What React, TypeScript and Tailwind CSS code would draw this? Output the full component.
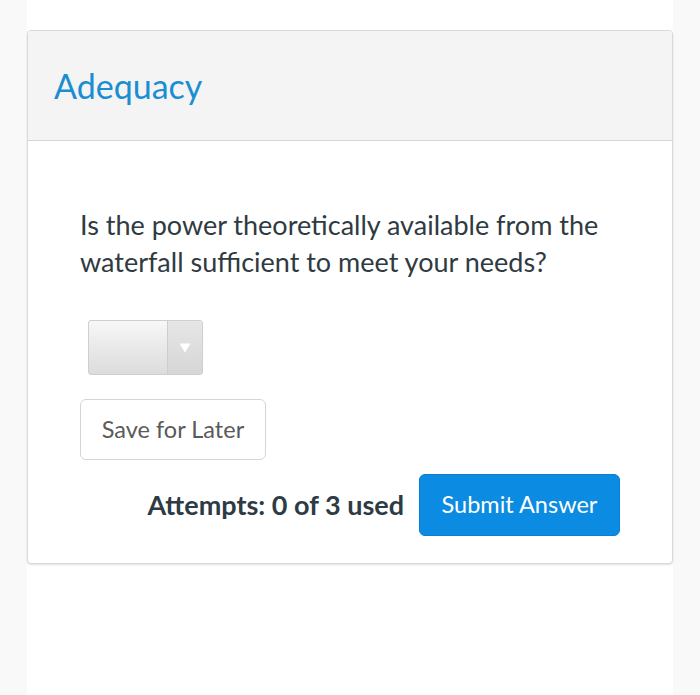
export default function App() {
  return (
    <div
      className="min-h-[695px] w-[700px] bg-[#f9f9f9] flex"
      style={{ fontFamily: 'Lato, "Open Sans", sans-serif' }}
    >
      <div className="ml-[27px] w-[646px] min-h-[695px] bg-white pt-[30px]">
        <div className="border border-[#d9d9d9] rounded-[4px] shadow-[0_1px_2px_rgba(0,0,0,0.12)] bg-white overflow-hidden">
          {/* header */}
          <div className="h-[110px] bg-[#f4f4f4] border-b border-[#d6d6d6] flex items-center pl-[26px]">
            <h2 className="text-[34px] leading-none text-[#1b8ed2] font-normal">Adequacy</h2>
          </div>

          {/* body */}
          <div className="pl-[52px] pr-[52px] pt-[65px] pb-[27px]">
            <p className="text-[27px] leading-[37px] text-[#2f3a42]">
              Is the power theoretically available from the waterfall sufficient to meet your needs?
            </p>

            <div className="mt-[40px] ml-[8px] w-[115px] h-[55px] flex rounded-[3px] border border-[#cfcfcf] overflow-hidden bg-gradient-to-b from-[#f7f7f7] to-[#dcdcdc]">
              <div className="flex-1" />
              <div className="w-[35px] border-l border-[#cdcdcd] bg-gradient-to-b from-[#e6e6e6] to-[#d6d6d6] flex items-center justify-center">
                <svg width="12" height="10" viewBox="0 0 12 10">
                  <path d="M0.5 0.5 L11.5 0.5 L6 9.5 Z" fill="#ffffff" />
                </svg>
              </div>
            </div>

            <button className="mt-[24px] w-[186px] h-[61px] border border-[#d5d5d5] rounded-[6px] bg-white text-[23.5px] text-[#5a5a5a]">
              Save for Later
            </button>

            <div className="mt-[14px] flex items-center justify-end gap-[15px]">
              <span className="text-[27px] font-bold text-[#2d3b45]">Attempts: 0 of 3 used</span>
              <button className="w-[201px] h-[62px] rounded-[6px] bg-[#0b8be1] border border-[#0a7fcf] text-white text-[23.5px]">
                Submit Answer
              </button>
            </div>
          </div>
        </div>
      </div>
    </div>
  )
}
